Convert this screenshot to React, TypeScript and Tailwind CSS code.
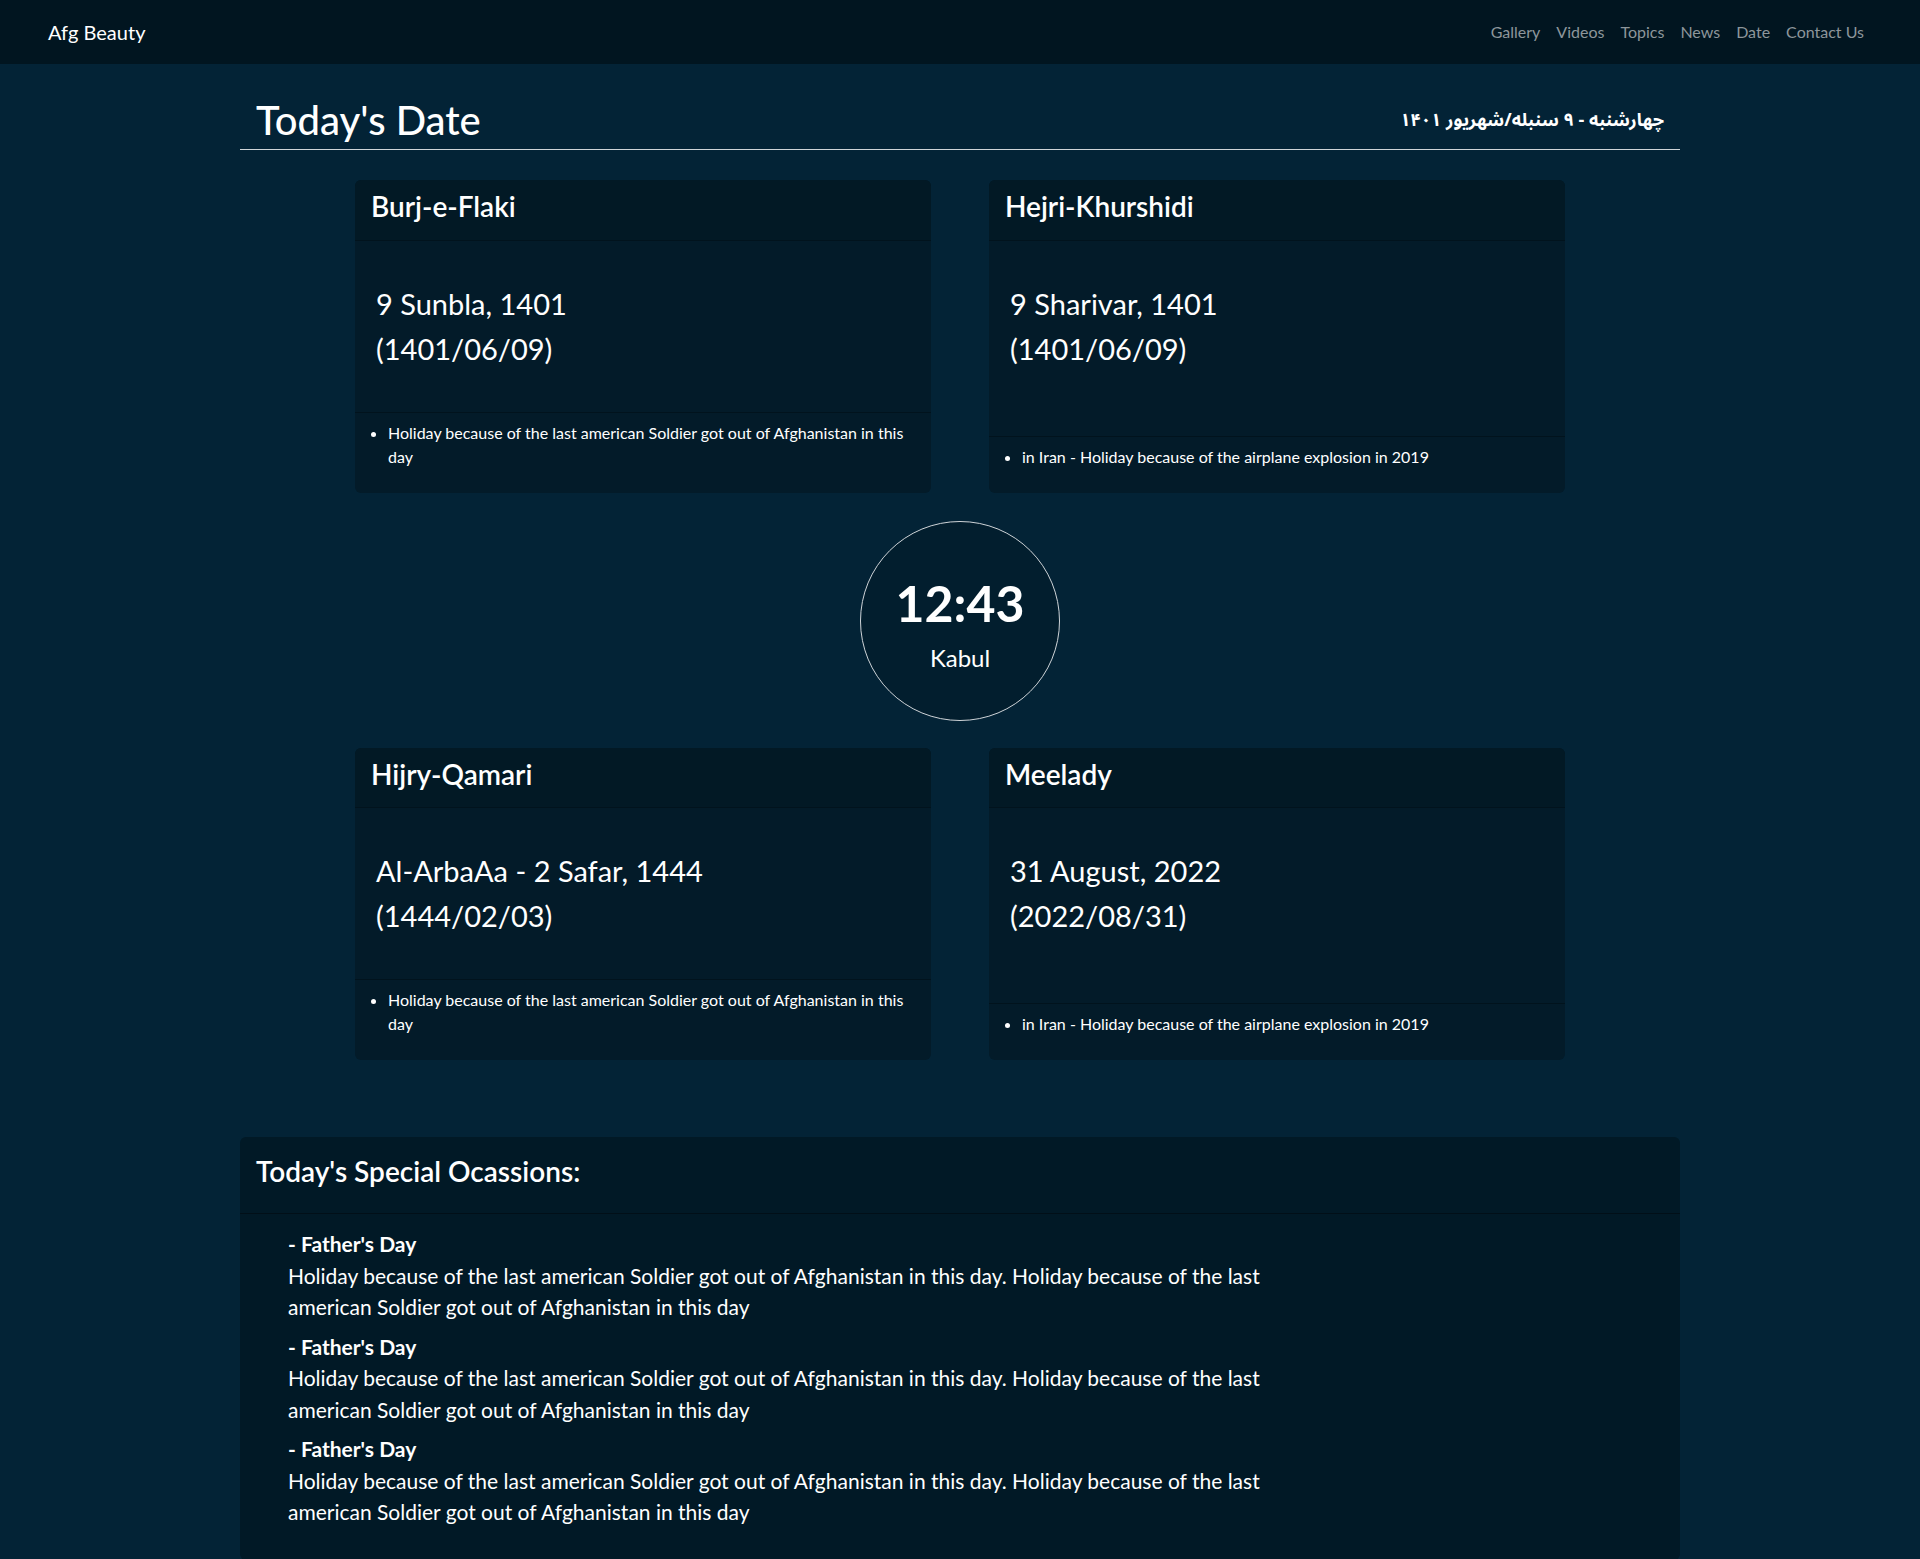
const NAV_LINKS = ["Gallery", "Videos", "Topics", "News", "Date", "Contact Us"];

const AFG_NOTE = "Holiday because of the last american Soldier got out of Afghanistan in this day";
const IRAN_NOTE = "in Iran - Holiday because of the airplane explosion in 2019";

const TOP_CARDS = [
  { title: "Burj-e-Flaki", date: "9 Sunbla, 1401", numeric: "1401/06/09", notes: [AFG_NOTE] },
  { title: "Hejri-Khurshidi", date: "9 Sharivar, 1401", numeric: "1401/06/09", notes: [IRAN_NOTE] },
];

const BOTTOM_CARDS = [
  { title: "Hijry-Qamari", date: "Al-ArbaAa - 2 Safar, 1444", numeric: "1444/02/03", notes: [AFG_NOTE] },
  { title: "Meelady", date: "31 August, 2022", numeric: "2022/08/31", notes: [IRAN_NOTE] },
];

const OCCASIONS = [
  { name: "Father's Day", text: AFG_NOTE + ". " + AFG_NOTE },
  { name: "Father's Day", text: AFG_NOTE + ". " + AFG_NOTE },
  { name: "Father's Day", text: AFG_NOTE + ". " + AFG_NOTE },
];

type CardProps = { title: string; date: string; numeric: string; notes: string[] };

function DateCard({ title, date, numeric, notes }: CardProps) {
  return (
    <div className="w-[576px] flex flex-col rounded-md bg-[#031b29] overflow-hidden">
      <div className="px-4 pt-[10px] pb-2 bg-[#021925] border-b border-[#01131d]">
        <h3 className="text-[28px] leading-[1.2] font-semibold mb-2">{title}</h3>
      </div>
      <div className="flex-1 pl-[21px] pr-5 pt-[40px] pb-[41px] text-[29px] leading-[45px]">
        <div>{date}</div>
        <div>({numeric})</div>
      </div>
      <div className="px-4 py-2 border-t border-[#01131d] text-[16px] leading-6">
        <ul className="list-disc pl-[17px] mb-4">
          {notes.map((n) => (
            <li key={n}>{n}</li>
          ))}
        </ul>
      </div>
    </div>
  );
}

export default function App() {
  return (
    <div className="min-h-screen bg-[#032336] text-white font-['Lato','Noto_Sans',sans-serif]">
      {/* Navbar */}
      <nav className="h-16 bg-[#011520] flex items-center justify-between px-12">
        <a className="text-[20px] leading-[30px]">Afg Beauty</a>
        <ul className="flex">
          {NAV_LINKS.map((l) => (
            <li key={l}>
              <a className="px-2 text-[16px] text-[#8d969b]">{l}</a>
            </li>
          ))}
        </ul>
      </nav>

      <main className="w-[1440px] mx-auto pt-8 pb-12">
        {/* Title row */}
        <div className="flex items-center justify-between px-4 pb-[5px] border-b border-[#cfd4d8]">
          <h1 className="text-[40px] leading-[48px] font-medium">Today's Date</h1>
          <div
            dir="rtl"
            className="text-[18px] font-bold font-['Noto_Sans_Arabic','Noto_Naskh_Arabic','DejaVu_Sans',sans-serif]"
          >
            چهارشنبه - ۹ سنبله/شهریور ۱۴۰۱
          </div>
        </div>

        {/* Top cards */}
        <div className="mt-[30px] flex justify-center gap-[58px]">
          {TOP_CARDS.map((c) => (
            <DateCard key={c.title} {...c} />
          ))}
        </div>

        {/* Clock */}
        <div className="mt-[28px] mx-auto w-[200px] h-[200px] rounded-full border border-[#cfd4d8] bg-[#021e2e] flex flex-col items-center pt-[51px]">
          <div className="text-[50px] leading-[60px] font-bold">12:43</div>
          <div className="mt-[7px] text-[24px] leading-9">Kabul</div>
        </div>

        {/* Bottom cards */}
        <div className="mt-[27px] flex justify-center gap-[58px]">
          {BOTTOM_CARDS.map((c) => (
            <DateCard key={c.title} {...c} />
          ))}
        </div>

        {/* Occasions */}
        <div className="mt-[77px] rounded-md bg-[#011926]">
          <div className="px-4 pt-4 pb-4 border-b border-[#010f18]">
            <h3 className="text-[28px] leading-9 font-semibold mb-2">Today's Special Ocassions:</h3>
          </div>
          <div className="px-4 pt-[14px] pb-4">
            <ul className="pl-8 mb-4 text-[21px] leading-[31.5px] w-[1040px]">
              {OCCASIONS.map((o, i) => (
                <li key={i} className="mb-2 last:mb-0">
                  <div className="font-bold">- {o.name}</div>
                  <div>{o.text}</div>
                </li>
              ))}
            </ul>
          </div>
        </div>
      </main>
    </div>
  );
}
